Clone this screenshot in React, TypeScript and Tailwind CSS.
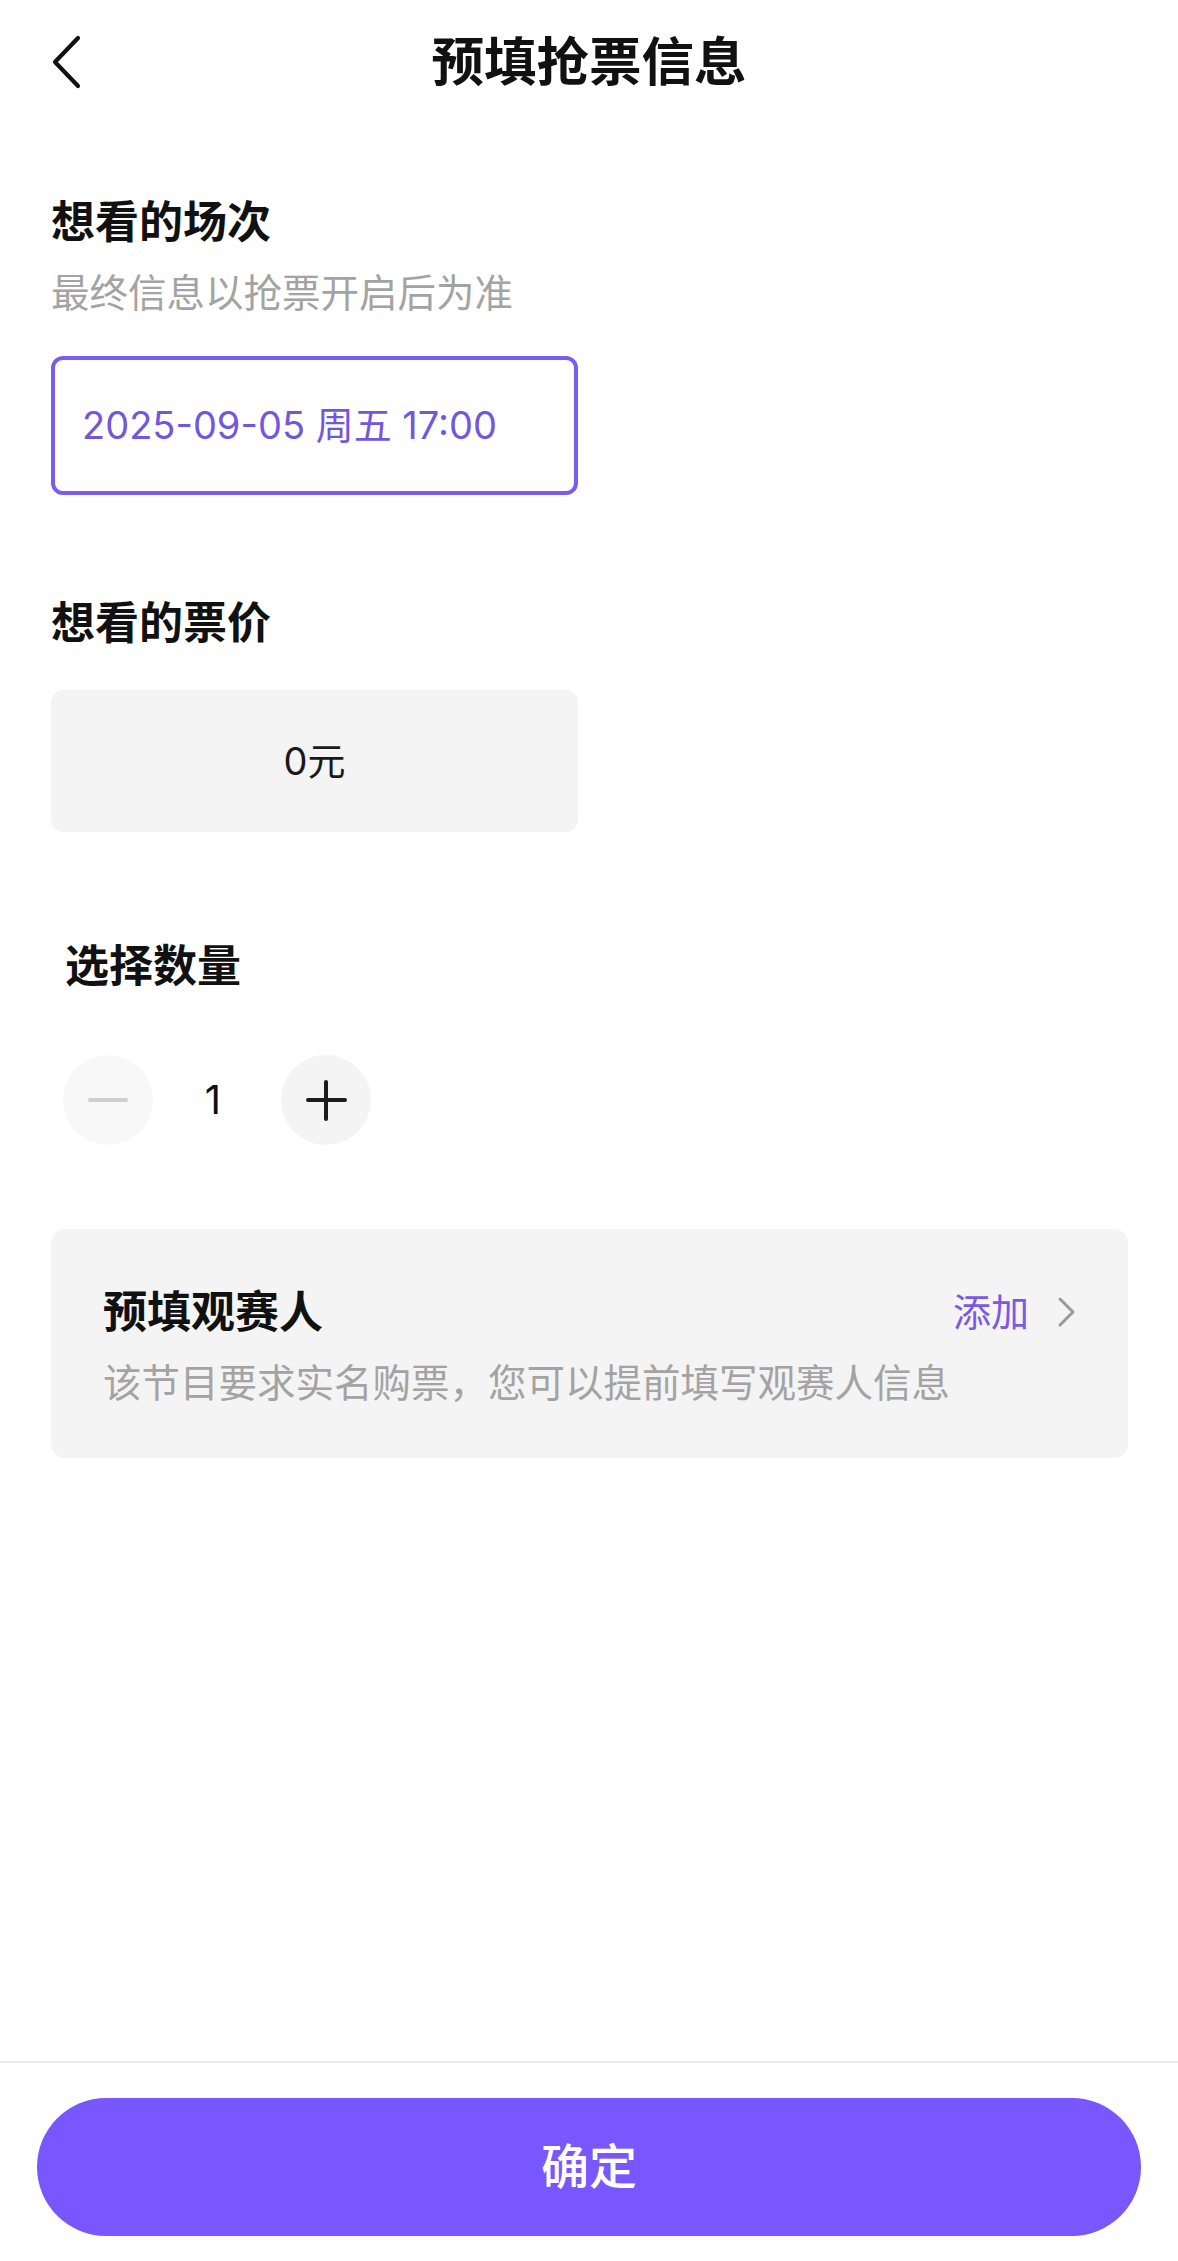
import React from "react";

const FONT = { fontFamily: 'Inter, "Noto Sans CJK SC", "Noto Sans", sans-serif' };

export default function App() {
  return (
    <div className="min-h-[2261px] w-full bg-white flex flex-col text-[#111]" style={FONT}>
      {/* Header */}
      <div className="grid grid-cols-[1fr_auto_1fr] items-center h-[124px] px-[51px]">
        <div className="flex items-center">
          <svg width="34" height="56" viewBox="0 0 34 56" className="-ml-[1px]">
            <path d="M28 4 L5 28 L28 52" fill="none" stroke="#111" strokeWidth="4.2" strokeLinecap="round" strokeLinejoin="round" />
          </svg>
        </div>
        <div className="text-[52.5px] leading-[64px] font-bold">预填抢票信息</div>
        <div />
      </div>

      <div className="px-[51px] flex flex-col">
        {/* Section 1 */}
        <div className="mt-[69px] text-[44px] leading-[58px] font-bold">想看的场次</div>
        <div className="mt-[17px] text-[38.5px] leading-[50px] text-[#a3a3a3]">最终信息以抢票开启后为准</div>
        <div className="mt-[38px] w-[527px] h-[139px] rounded-[12px] border-[4px] border-[#7b5cf2] flex items-center pl-[27px]">
          <span className="text-[38px] text-[#7257de]">2025-09-05 周五 17:00</span>
        </div>

        {/* Section 2 */}
        <div className="mt-[99px] text-[44px] leading-[58px] font-bold">想看的票价</div>
        <div className="mt-[38px] w-[527px] h-[142px] rounded-[12px] bg-[#f4f4f4] flex items-center justify-center">
          <span className="text-[38px] text-[#1a1a1a]">0元</span>
        </div>

        {/* Section 3 */}
        <div className="mt-[105px] pl-[14px] text-[44px] leading-[58px] font-bold">选择数量</div>
        <div className="mt-[60px] pl-[12px] flex items-center">
          <div className="w-[90px] h-[90px] rounded-full bg-[#f8f8f8] flex items-center justify-center">
            <div className="w-[40px] h-[4px] rounded-full bg-[#cfcfcf]" />
          </div>
          <div className="w-[128px] pr-[8px] text-center text-[40px] text-[#111]">1</div>
          <div className="w-[90px] h-[90px] rounded-full bg-[#f4f4f4] flex items-center justify-center relative">
            <div className="w-[41px] h-[4px] rounded-full bg-[#1c1c1c]" />
            <div className="absolute w-[4px] h-[41px] rounded-full bg-[#1c1c1c]" />
          </div>
        </div>

        {/* Observer card */}
        <div className="mt-[84px] w-[1077px] rounded-[14px] bg-[#f4f4f4] pt-[54px] pb-[50px] px-[52px]">
          <div className="flex items-center justify-between h-[58px]">
            <span className="text-[44px] leading-[58px] font-bold">预填观赛人</span>
            <div className="flex items-center gap-[29px]">
              <span className="text-[38px] text-[#7a5ae2]">添加</span>
              <svg width="18" height="30" viewBox="0 0 18 30">
                <path d="M2 2 L15 15 L2 28" fill="none" stroke="#9a9a9a" strokeWidth="3" strokeLinecap="round" strokeLinejoin="round" />
              </svg>
            </div>
          </div>
          <div className="mt-[17px] text-[38.5px] leading-[50px] text-[#a3a3a3]">该节目要求实名购票，您可以提前填写观赛人信息</div>
        </div>
      </div>

      {/* Footer */}
      <div className="mt-auto border-t-[2px] border-[#ececec] pt-[35px] pb-[25px] px-[37px]">
        <div className="h-[138px] w-full rounded-full bg-[#7857ff] flex items-center justify-center">
          <span className="text-[48px] text-white font-medium">确定</span>
        </div>
      </div>
    </div>
  );
}
